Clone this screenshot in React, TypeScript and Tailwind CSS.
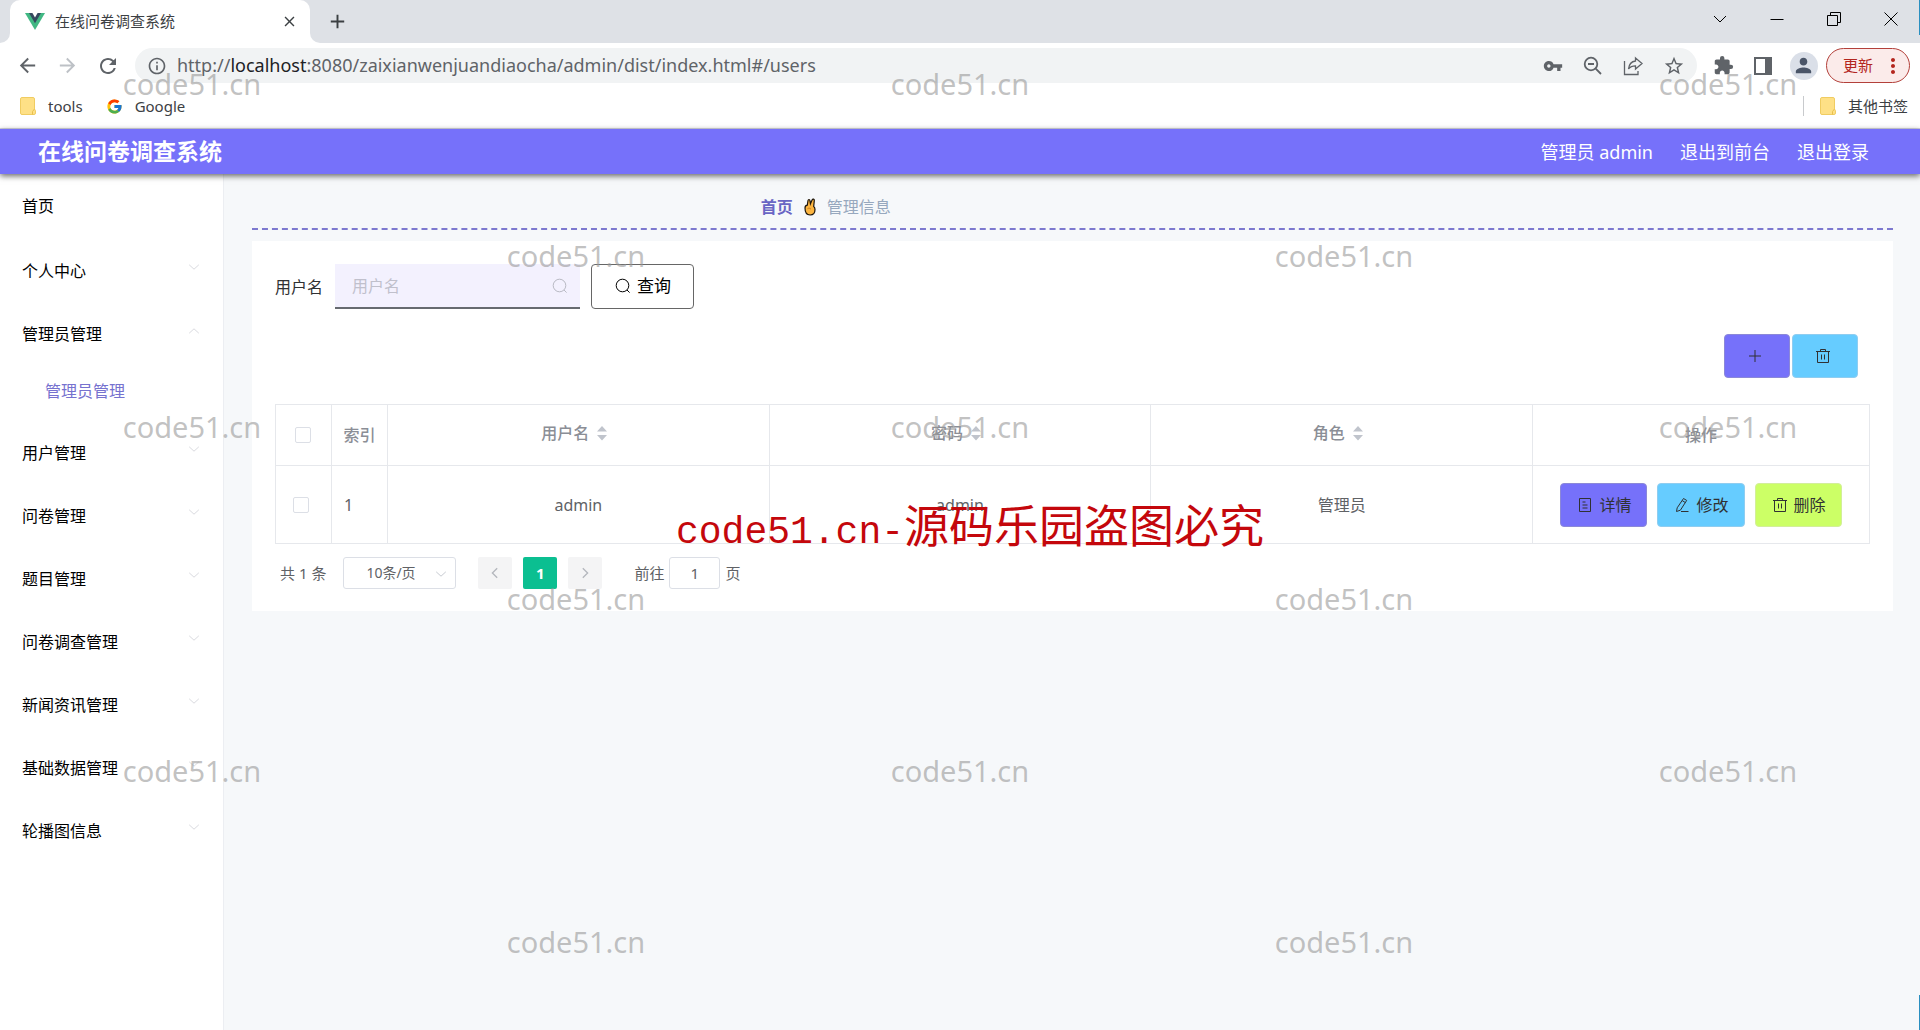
import { useState, type ReactNode } from 'react';
import {
  MdAdd,
  MdArrowBack,
  MdArrowForward,
  MdClose,
  MdExtension,
  MdInfoOutline,
  MdMoreVert,
  MdPerson,
  MdRefresh,
  MdStarBorder,
  MdVpnKey,
} from 'react-icons/md';
import { FcGoogle } from 'react-icons/fc';

const menus = [
  { title: '个人中心' },
  { title: '管理员管理', children: ['管理员管理'] },
  { title: '用户管理' },
  { title: '问卷管理' },
  { title: '题目管理' },
  { title: '问卷调查管理' },
  { title: '新闻资讯管理' },
  { title: '基础数据管理' },
  { title: '轮播图信息' },
];

const users = [{ id: 1, username: 'admin', password: 'admin', role: '管理员' }];

// ---------- Icons ----------

type IconProps = { className?: string; children?: ReactNode };

const LineIcon = ({ className = 'size-4', children }: IconProps) => (
  <svg
    viewBox="0 0 16 16"
    fill="none"
    stroke="currentColor"
    strokeWidth="1"
    className={className}
    aria-hidden="true"
  >
    {children}
  </svg>
);

const SearchIcon = ({ className }: IconProps) => (
  <LineIcon className={className}>
    <circle cx="7.5" cy="7.5" r="6.3" />
    <path d="M12 12l2.6 2.6" />
  </LineIcon>
);

const ChevronDown = ({ className }: IconProps) => (
  <LineIcon className={className}>
    <path d="M2.5 5.5L8 10.5l5.500-5" />
  </LineIcon>
);

const ChevronUp = ({ className }: IconProps) => (
  <LineIcon className={className}>
    <path d="M2.500 10.500L8 5.500l5.500 5" />
  </LineIcon>
);

const TrashIcon = ({ className }: IconProps) => (
  <LineIcon className={className}>
    <path d="M1 3.500h14M5.500 3.500v-2h5v2M2.500 3.500v11h11v-11M6.500 6.500v5M9.500 6.500v5" />
  </LineIcon>
);

const DocIcon = ({ className }: IconProps) => (
  <LineIcon className={className}>
    <path d="M2.500 1.500h11v13h-11zM5.500 5h3M5.500 8h5M5.500 11h5" />
  </LineIcon>
);

const EditIcon = ({ className }: IconProps) => (
  <LineIcon className={className}>
    <path d="M9.500 1.500l3.200 1.900-6.300 9.800-3.900 1.300.7-3.700zM8.200 3.600l3.200 2M7 14.500h7.500" />
  </LineIcon>
);

const VueLogo = () => (
  <svg viewBox="0 0 20 17" className="h-[17px] w-5" aria-hidden="true">
    <path d="M0 0h20L10 17z" fill="#41b883" />
    <path d="M4 0h12l-6 10.300z" fill="#35495e" />
    <path d="M7.400 0h5.200L10 4.400z" fill="#fff" />
  </svg>
);

const FolderIcon = () => (
  <svg viewBox="0 0 16 18" className="h-[18px] w-4" aria-hidden="true">
    <path d="M.5 2a1.500 1.500 0 0 1 1.500-1.500h11A1.500 1.500 0 0 1 14.500 2v10l1 2v2a1.500 1.500 0 0 1-1.500 1.500H2A1.500 1.500 0 0 1 .5 16z" fill="#fee086" stroke="#f0cc61" />
    <path d="M12.500 17.500v-3l2-2.500" fill="none" stroke="#e8bf4c" />
  </svg>
);

const HandIcon = () => (
  <svg viewBox="0 0 14 18" className="h-[18px] w-3.5" aria-hidden="true">
    <path
      d="M2 10c0-1.600.8-2.600 2.300-2.800L5 2.500c.2-1.400 1.800-1.300 1.900 0l.5 3.300L9.200 1.700c.6-1.200 2.300-.6 2.100.8l-.6 6c.9.600 1.300 1.500 1.300 3 0 3.500-1.700 5.500-4.900 5.500-3.300 0-5.100-2.200-5.100-7z"
      fill="#fcb540"
      stroke="#1c140a"
      strokeWidth="1.200"
    />
    <path d="M4.500 10.700c1.300-.8 2.600-.6 3.500.6" fill="none" stroke="#c47a1c" />
  </svg>
);

const SortIcon = () => (
  <svg viewBox="0 0 10 16" className="h-4 w-2.5" fill="#c0c4cc" aria-hidden="true">
    <path d="M5 1l5 5.500H0zM5 15.500L0 10h10z" />
  </svg>
);

// ---------- Browser window ----------

const BrowserChrome = () => (
  <div className="bg-white text-[#5f6368]">
    <div className="flex h-[43px] items-end bg-[#dee1e6]">
      <div className="flex size-2.5 shrink-0 bg-white">
        <span className="size-full rounded-br-[10px] bg-[#dee1e6]" />
      </div>
      <div className="flex h-[43px] w-[300px] items-center rounded-t-[10px] bg-white pr-3 pl-[15px]">
        <VueLogo />
        <span className="ml-2.5 flex-1 text-[15px] text-[#3c4043]">在线问卷调查系统</span>
        <button aria-label="关闭标签页" className="text-[#3c4043]">
          <MdClose size={17} />
        </button>
      </div>
      <div className="flex size-2.5 shrink-0 bg-white">
        <span className="size-full rounded-bl-[10px] bg-[#dee1e6]" />
      </div>
      <button aria-label="新标签页" className="mb-2.5 ml-1.5 text-[#3c4043]">
        <MdAdd size={23} />
      </button>
      <div className="mb-4 ml-auto flex gap-[41px] pr-[21px] text-black">
        <button aria-label="搜索标签页">
          <LineIcon className="size-4"><path d="M2 5l6 6 6-6" /></LineIcon>
        </button>
        <button aria-label="最小化">
          <LineIcon className="size-4"><path d="M1.500 8.500h13" /></LineIcon>
        </button>
        <button aria-label="还原">
          <LineIcon className="size-4">
            <path d="M1.500 4.500h10v10h-10zM4.500 4.500v-3h10v10h-3" />
          </LineIcon>
        </button>
        <button aria-label="关闭">
          <LineIcon className="size-4"><path d="M1.500 1.500l13 13M14.500 1.500l-13 13" /></LineIcon>
        </button>
      </div>
    </div>

    <div className="flex h-[45px] items-center pr-2.5 pl-4">
      <button aria-label="后退"><MdArrowBack size={23} /></button>
      <button aria-label="前进" className="ml-[17px] text-[#bdc1c6]"><MdArrowForward size={23} /></button>
      <button aria-label="重新加载" className="ml-[17px]"><MdRefresh size={24} /></button>
      <div className="ml-[15px] flex h-[35px] flex-1 items-center rounded-full bg-[#f1f3f4] pr-3 pl-3">
        <MdInfoOutline size={20} />
        <span className="ml-2.5 flex-1 pb-0.5 text-lg">
          http://<span className="text-[#202124]">localhost</span>
          :8080/zaixianwenjuandiaocha/admin/dist/index.html#/users
        </span>
        <div className="flex items-center gap-5">
          <button aria-label="密码"><MdVpnKey size={20} /></button>
          <button aria-label="缩放">
            <svg viewBox="0 0 20 20" className="size-5" fill="none" stroke="currentColor" strokeWidth="1.800">
              <circle cx="8" cy="8" r="6.300" />
              <path d="M12.700 12.700l5.300 5.300M5 8h6" />
            </svg>
          </button>
          <button aria-label="分享">
            <svg viewBox="0 0 20 20" className="size-5" fill="none" stroke="currentColor" strokeWidth="1.300">
              <path d="M1.500 5v13.500H15V15" />
              <path d="M12.500 2l6.500 5.500-6.500 5.500V9.800c-3.500 0-5.500 1-7 3.200.5-4.500 3-7.500 7-8z" />
            </svg>
          </button>
          <button aria-label="收藏"><MdStarBorder size={22} /></button>
        </div>
      </div>
      <button aria-label="扩展程序" className="ml-4"><MdExtension size={21} /></button>
      <button aria-label="侧边栏" className="ml-5">
        <svg viewBox="0 0 18 18" className="size-[18px]" fill="none" stroke="currentColor" strokeWidth="2">
          <path d="M1 1h16v16H1z" />
          <path d="M12 1h5v16h-5z" fill="currentColor" />
        </svg>
      </button>
      <button
        aria-label="个人资料"
        className="ml-[18px] flex size-7 items-center justify-center rounded-full bg-[#dadfe8] text-[#4a5568]"
      >
        <MdPerson size={23} />
      </button>
      <button className="ml-2 flex h-[35px] items-center rounded-full border border-[#b3403a] bg-[#fbebea] pr-1 pl-4 text-[15px] text-[#b3261e]">
        更新
        <MdMoreVert size={24} className="ml-2" />
      </button>
    </div>

    <div className="flex h-[41px] items-center border-b border-[#d5d6e0] pr-3 pb-1 pl-5 text-[15px] text-[#3c4043]">
      <a href="#tools" className="flex items-center gap-3"><FolderIcon />tools</a>
      <a href="#google" className="ml-[23px] flex items-center gap-3"><FcGoogle size={17} />Google</a>
      <span className="ml-auto h-5 w-px bg-[#c8cacd]" />
      <a href="#other" className="ml-4 flex items-center gap-3"><FolderIcon />其他书签</a>
    </div>
  </div>
);

// ---------- Admin layout ----------

const Header = () => (
  <header className="relative z-10 flex h-[45px] items-center bg-[#7671fa] pr-[51px] pl-[38px] text-white shadow-[0_2px_6px_rgba(0,0,0,0.6)]">
    <h1 className="text-[23px] font-bold">在线问卷调查系统</h1>
    <nav className="ml-auto flex gap-[27px] text-lg">
      <span>管理员 admin</span>
      <a href="#front">退出到前台</a>
      <a href="#login">退出登录</a>
    </nav>
  </header>
);

const Sidebar = () => (
  <aside className="w-[224px] shrink-0 border-r border-[#eceef2] bg-white text-base text-black">
    <a href="#home" className="flex h-[65px] items-center pb-0.5 pl-[22px]">首页</a>
    {menus.map((menu) => (
      <div key={menu.title}>
        <button className="flex h-[63px] w-full items-center justify-between pr-[22px] pl-[22px]">
          {menu.title}
          {menu.children ? (
            <ChevronUp className="mb-1.5 size-3.5 text-[#d3d5da]" />
          ) : (
            <ChevronDown className="mb-2 size-3.5 text-[#d3d5da]" />
          )}
        </button>
        {menu.children?.map((child) => (
          <a
            key={child}
            href="#users"
            className="flex h-14 items-center pb-1 pl-[45px] text-[#7672cf]"
          >
            {child}
          </a>
        ))}
      </div>
    ))}
  </aside>
);

const SearchForm = () => {
  const [keyword, setKeyword] = useState('');

  return (
    <form className="flex h-[45px] items-center" onSubmit={(e) => e.preventDefault()}>
      <label htmlFor="username" className="text-base text-[#303133]">用户名</label>
      <div className="ml-3 flex h-full w-[245px] items-center border-b-2 border-[#666a70] bg-[#f3f1fe] pr-3 pl-[17px]">
        <input
          id="username"
          type="text"
          value={keyword}
          onChange={(e) => setKeyword(e.target.value)}
          placeholder="用户名"
          className="min-w-0 flex-1 bg-transparent text-base outline-none placeholder:text-[#c0c0cc]"
        />
        <SearchIcon className="size-4 text-[#b9bac4]" />
      </div>
      <button
        type="submit"
        className="ml-[11px] flex h-full items-center gap-1.5 rounded border border-[#666] pr-[22px] pb-0.5 pl-[23px] text-[17px] text-black"
      >
        <SearchIcon className="size-4" />
        查询
      </button>
    </form>
  );
};

const Checkbox = ({ label }: { label: string }) => (
  <input
    type="checkbox"
    aria-label={label}
    className="block size-4 appearance-none rounded-xs border border-[#dcdfe6] bg-white checked:bg-[#7671fa]"
  />
);

const UserTable = () => (
  <table className="w-full table-fixed border-collapse border border-[#e6e8ec] text-base text-[#606266]">
    <colgroup>
      <col className="w-14" />
      <col className="w-14" />
      <col />
      <col />
      <col />
      <col className="w-[337px]" />
    </colgroup>
    <thead className="text-[#8b8e96]">
      <tr className="h-[61px] [&>th]:border [&>th]:border-[#e6e8ec] [&>th]:font-medium">
        <th className="pl-[19px]"><Checkbox label="全选" /></th>
        <th>索引</th>
        {['用户名', '密码', '角色'].map((name) => (
          <th key={name} className="pr-2">
            <button className="inline-flex items-center gap-2 pb-1">
              {name}
              <SortIcon />
            </button>
          </th>
        ))}
        <th>操作</th>
      </tr>
    </thead>
    <tbody>
      {users.map((user) => (
        <tr key={user.id} className="h-[78px] [&>td]:border [&>td]:border-[#e6e8ec] [&>td]:text-center">
          <td className="pl-[17px]"><Checkbox label="选择" /></td>
          <td className="pr-[22px]">{user.id}</td>
          <td>{user.username}</td>
          <td>{user.password}</td>
          <td>{user.role}</td>
          <td>
            <div className="flex justify-center gap-2.5 text-[#303133]">
              <button className="flex h-11 items-center gap-1.5 rounded border border-[#8b88d8] bg-[#7671fa] pr-[15px] pl-4">
                <DocIcon />
                详情
              </button>
              <button className="flex h-11 items-center gap-1.5 rounded border border-[#8fcdf0] bg-[#66ccff] pr-[15px] pl-4">
                <EditIcon />
                修改
              </button>
              <button className="flex h-11 items-center gap-1.5 rounded border border-[#d3ee9a] bg-[#ccff66] pr-[15px] pl-4">
                <TrashIcon />
                删除
              </button>
            </div>
          </td>
        </tr>
      ))}
    </tbody>
  </table>
);

const Pagination = () => (
  <div className="mt-[13px] flex h-8 items-center pl-[5px] text-[15px] text-[#606266]">
    <span>共 1 条</span>
    <div className="relative ml-[17px]">
      <select
        aria-label="每页条数"
        className="h-8 w-[113px] appearance-none rounded-[3px] border border-[#dcdfe6] bg-white pl-[22px] text-sm"
      >
        <option>10条/页</option>
      </select>
      <ChevronDown className="pointer-events-none absolute top-2.5 right-2 size-3.5 text-[#c0c4cc]" />
    </div>
    <div className="ml-[22px] flex gap-[11px]">
      <button aria-label="上一页" className="flex h-8 w-[34px] items-center justify-center rounded-xs bg-[#f4f4f5] text-[#b4b7bd]">
        <LineIcon className="size-3.5"><path d="M10.500 2.500L5 8l5.500 5.500" strokeWidth="1.500" /></LineIcon>
      </button>
      <button className="h-8 w-[34px] rounded-xs bg-[#0bbf91] font-bold text-white">1</button>
      <button aria-label="下一页" className="flex h-8 w-[34px] items-center justify-center rounded-xs bg-[#f4f4f5] text-[#b4b7bd]">
        <LineIcon className="size-3.5"><path d="M5.500 2.500L11 8l-5.500 5.500" strokeWidth="1.500" /></LineIcon>
      </button>
    </div>
    <label htmlFor="page" className="ml-8">前往</label>
    <input
      id="page"
      type="text"
      defaultValue="1"
      className="mx-[5px] h-8 w-[51px] rounded-[3px] border border-[#dcdfe6] bg-white text-center"
    />
    <span>页</span>
  </div>
);

// Repeated site mark over the whole page, plus the red notice in the middle
const Watermarks = () => (
  <div className="pointer-events-none absolute inset-0 z-20 font-['Noto_Sans']">
    <div className="grid h-full grid-rows-6 text-[29px] text-[#999]/60">
      {[0, 1, 2, 3, 4, 5].map((row) => (
        <div key={row} className="grid grid-cols-5 items-center pb-1 text-center">
          {[0, 1, 2, 3, 4].map((col) => (
            <span key={col}>{(row + col) % 2 === 0 && 'code51.cn'}</span>
          ))}
        </div>
      ))}
    </div>
    <div className="absolute inset-0 flex items-center justify-center pt-5 pl-5">
      <p className="flex items-baseline text-[#c4070c]">
        <span className="font-['Liberation_Mono'] text-[38px]">code51.cn-</span>
        <span className="font-['Noto_Sans_CJK_SC'] text-[45px]">源码乐园盗图必究</span>
      </p>
    </div>
    <span className="absolute top-0 right-0 h-[35px] w-px bg-[#2a8fc0]" />
    <span className="absolute right-0 bottom-0 h-[35px] w-px bg-[#2a8fc0]" />
  </div>
);

export default function App() {
  return (
    <div className="relative flex min-h-screen flex-col bg-[#f6f8fa] font-['Noto_Sans','Noto_Sans_CJK_SC',sans-serif]">
      <BrowserChrome />
      <Header />
      <div className="flex flex-1">
        <Sidebar />
        <main className="min-w-0 flex-1 pr-[27px] pl-7">
          <nav className="flex h-14 items-center border-b-2 border-dashed border-[#7d79cf] pt-3 pl-[31%] text-base">
            <a href="#home" className="font-bold text-[#6a66c4]">首页</a>
            <span className="mx-2.5"><HandIcon /></span>
            <span className="text-[#97a8be]">管理信息</span>
          </nav>

          <section className="mt-[11px] bg-white px-[23px] pt-[23px] pb-[22px]">
            <SearchForm />
            <div className="mt-[25px] mb-[26px] flex justify-end gap-0.5 pr-3 text-[#303133]">
              <button aria-label="新增" className="flex h-11 w-[66px] items-center justify-center rounded border border-[#8b88d8] bg-[#7671fa] pr-1">
                <LineIcon><path d="M8 2v12M2 8h12" /></LineIcon>
              </button>
              <button aria-label="批量删除" className="flex h-11 w-[66px] items-center justify-center rounded border border-[#8fcdf0] bg-[#66ccff] pr-1">
                <TrashIcon />
              </button>
            </div>
            <UserTable />
            <Pagination />
          </section>
        </main>
      </div>
      <Watermarks />
    </div>
  );
}
